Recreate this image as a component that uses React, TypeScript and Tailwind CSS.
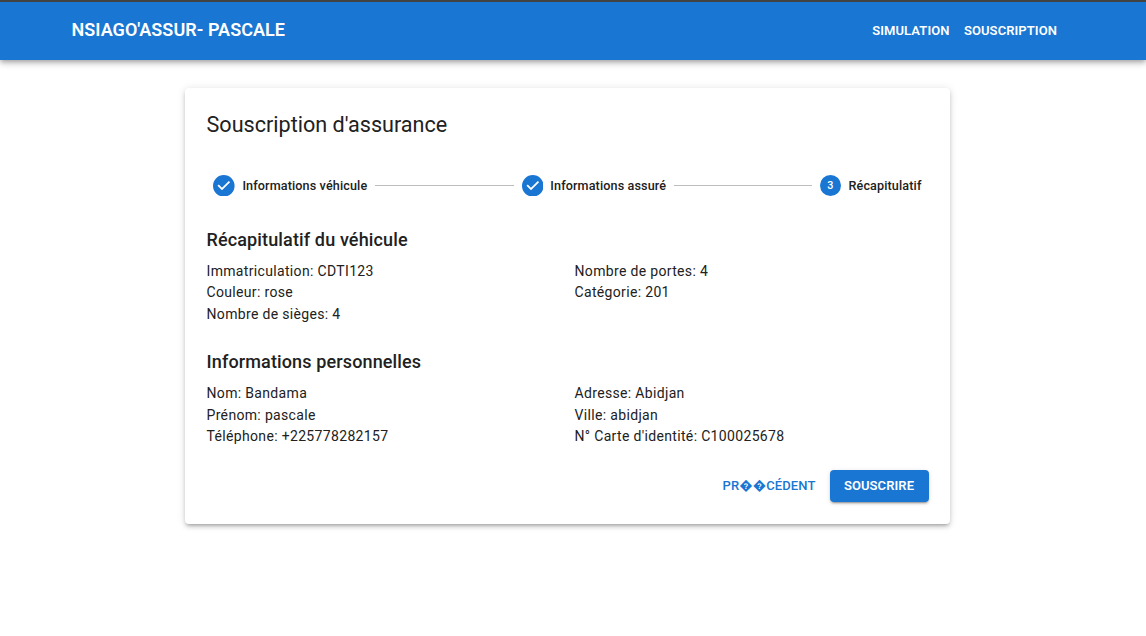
const Check = () => (
  <svg viewBox="0 0 24 24" className="size-[21.6px] shrink-0 fill-[#1976d2]">
    <path d="M12 0a12 12 0 1 0 0 24 12 12 0 0 0 0-24zm-2 17l-5-5 1.4-1.4 3.6 3.6L17.6 6.6 19 8l-9 9z" />
  </svg>
);

function Col({ items, className }: { items: string[]; className: string }) {
  return (
    <div className={`text-[14px] leading-[21.6px] tracking-[0.335px] ${className}`}>
      {items.map((t) => <p key={t}>{t}</p>)}
    </div>
  );
}

export default function App() {
  return (
    <div className="min-h-[636px] bg-white font-[Roboto,sans-serif] text-[#212121]">
      <header className="flex h-[60px] items-center justify-between border-t-2 border-[#424242] bg-[#1976d2] pl-[71.5px] pr-[89px] text-white shadow-[0px_2px_4px_-1px_rgba(0,0,0,0.2),0px_4px_5px_0px_rgba(0,0,0,0.14),0px_1px_10px_0px_rgba(0,0,0,0.12)]">
        <h1 className="pb-[3px] text-[18px] font-semibold tracking-[0.04px]">NSIAGO'ASSUR- PASCALE</h1>
        <nav className="flex gap-[14.4px] text-[13px] font-semibold tracking-[0.08px]">
          <a>SIMULATION</a>
          <a>SOUSCRIPTION</a>
        </nav>
      </header>
      <main className="ml-[185px] mt-7 h-[436px] w-[765px] rounded-[4px] bg-white px-[21.5px] pt-[21.5px] shadow-[0px_3px_3px_-2px_rgba(0,0,0,0.2),0px_3px_4px_0px_rgba(0,0,0,0.14),0px_1px_8px_0px_rgba(0,0,0,0.12)]">
        <h2 className="text-[21.6px] leading-[29px]">Souscription d'assurance</h2>
        <div className="mt-[34px] flex h-[26px] items-center pl-[6.5px] pr-[7px] text-[12.6px] font-medium tracking-[0.128px]">
          <Check /><span className="ml-[7.8px] pt-px">Informations véhicule</span>
          <i className="mx-[7.5px] h-px flex-1 bg-[#bdbdbd]" />
          <Check /><span className="ml-[7.2px] pt-px">Informations assuré</span>
          <i className="ml-[7.5px] mr-[7.5px] h-px w-[138.5px] bg-[#bdbdbd]" />
          <b className="flex size-[21.6px] items-center justify-center rounded-full bg-[#1976d2] pt-px text-[10.8px] font-medium text-white">3</b>
          <span className="ml-[7.2px] pt-px">Récapitulatif</span>
        </div>
        <h3 className="mt-[26px] text-[18px] font-medium leading-[29px] tracking-[0.135px]">Récapitulatif du véhicule</h3>
        <div className="mt-[7.2px] flex">
          <Col className="w-[368px]" items={["Immatriculation: CDTI123", "Couleur: rose", "Nombre de sièges: 4"]} />
          <Col className="flex-1" items={["Nombre de portes: 4", "Catégorie: 201"]} />
        </div>
        <h3 className="mt-[21.8px] text-[18px] font-medium leading-[29px] tracking-[0.135px]">Informations personnelles</h3>
        <div className="mt-[7px] flex">
          <Col className="w-[368px]" items={["Nom: Bandama", "Prénom: pascale", "Téléphone: +225778282157"]} />
          <Col className="flex-1" items={["Adresse: Abidjan", "Ville: abidjan", "N° Carte d'identité: C100025678"]} />
        </div>
        <div className="mt-[22px] flex items-center justify-end gap-[14px] text-[13px] font-medium tracking-[0.12px]">
          <button className="text-[#1976d2]">PR��CÉDENT</button>
          <button className="h-8 w-[99px] rounded-[4px] bg-[#1976d2] font-semibold tracking-[0.08px] text-white shadow-[0px_3px_1px_-2px_rgba(0,0,0,0.2),0px_2px_2px_0px_rgba(0,0,0,0.14),0px_1px_5px_0px_rgba(0,0,0,0.12)]">SOUSCRIRE</button>
        </div>
      </main>
    </div>
  );
}
